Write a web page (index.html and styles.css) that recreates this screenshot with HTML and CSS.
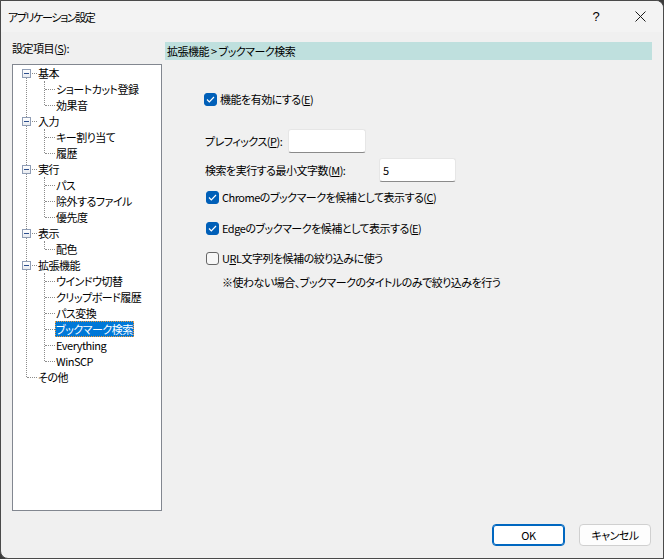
FILE: index.html
```html
<!DOCTYPE html>
<html lang="ja">

<head>
    <meta charset="UTF-8">
    <title>アプリケーション設定</title>
    <link rel="stylesheet" href="styles.css">
</head>

<body>
    <div class="window">
        <div class="titlebar">
            <span class="title">アプリケーション設定</span>
            <div class="caption">
                <span class="cap-btn help">?</span>
                <span class="cap-btn close">
                    <svg width="11" height="11" viewBox="0 0 11 11"><path d="M0.5 0.5 L10.5 10.5 M10.5 0.5 L0.5 10.5" stroke="#1a1a1a" stroke-width="1" fill="none"/></svg>
                </span>
            </div>
        </div>

        <div class="main">
            <div class="side">
                <div class="side-label">設定項目(<u>S</u>):</div>
                <div class="tree">
                    <ul class="tree-root">
                        <li class="group">
                            <div class="row"><span class="toggle"></span><span class="label">基本</span></div>
                            <ul class="children">
                                <li class="row"><span class="label">ショートカット登録</span></li>
                                <li class="row"><span class="label">効果音</span></li>
                            </ul>
                        </li>
                        <li class="group">
                            <div class="row"><span class="toggle"></span><span class="label">入力</span></div>
                            <ul class="children">
                                <li class="row"><span class="label">キー割り当て</span></li>
                                <li class="row"><span class="label">履歴</span></li>
                            </ul>
                        </li>
                        <li class="group">
                            <div class="row"><span class="toggle"></span><span class="label">実行</span></div>
                            <ul class="children">
                                <li class="row"><span class="label">パス</span></li>
                                <li class="row"><span class="label">除外するファイル</span></li>
                                <li class="row"><span class="label">優先度</span></li>
                            </ul>
                        </li>
                        <li class="group">
                            <div class="row"><span class="toggle"></span><span class="label">表示</span></div>
                            <ul class="children">
                                <li class="row"><span class="label">配色</span></li>
                            </ul>
                        </li>
                        <li class="group">
                            <div class="row"><span class="toggle"></span><span class="label">拡張機能</span></div>
                            <ul class="children">
                                <li class="row"><span class="label">ウインドウ切替</span></li>
                                <li class="row"><span class="label">クリップボード履歴</span></li>
                                <li class="row"><span class="label">パス変換</span></li>
                                <li class="row"><span class="label selected">ブックマーク検索</span></li>
                                <li class="row"><span class="label">Everything</span></li>
                                <li class="row"><span class="label">WinSCP</span></li>
                            </ul>
                        </li>
                        <li class="group">
                            <div class="row plain"><span class="label">その他</span></div>
                        </li>
                    </ul>
                </div>
            </div>

            <div class="panel">
                <div class="crumb">拡張機能 &gt; ブックマーク検索</div>
                <div class="options">
                    <label class="check-row opt-enable">
                        <span class="box checked"><svg width="9" height="7" viewBox="0 0 9 7"><path d="M1 3.5 L3.3 5.8 L8 1" stroke="#fff" stroke-width="1.2" fill="none"/></svg></span>
                        <span>機能を有効にする(<u>E</u>)</span>
                    </label>

                    <div class="field field-prefix">
                        <span class="field-label">プレフィックス(<u>P</u>):</span>
                        <span class="input"></span>
                    </div>

                    <div class="field field-min">
                        <span class="field-label">検索を実行する最小文字数(<u>M</u>):</span>
                        <span class="input">5</span>
                    </div>

                    <label class="check-row opt-chrome">
                        <span class="box checked"><svg width="9" height="7" viewBox="0 0 9 7"><path d="M1 3.5 L3.3 5.8 L8 1" stroke="#fff" stroke-width="1.2" fill="none"/></svg></span>
                        <span>Chromeのブックマークを候補として表示する(<u>C</u>)</span>
                    </label>

                    <label class="check-row opt-edge">
                        <span class="box checked"><svg width="9" height="7" viewBox="0 0 9 7"><path d="M1 3.5 L3.3 5.8 L8 1" stroke="#fff" stroke-width="1.2" fill="none"/></svg></span>
                        <span>Edgeのブックマークを候補として表示する(<u>E</u>)</span>
                    </label>

                    <label class="check-row opt-url">
                        <span class="box"></span>
                        <span>U<u>R</u>L文字列を候補の絞り込みに使う</span>
                    </label>

                    <div class="note">※使わない場合、ブックマークのタイトルのみで絞り込みを行う</div>
                </div>
            </div>
        </div>

        <div class="footer">
            <button class="btn primary">OK</button>
            <button class="btn">キャンセル</button>
        </div>
    </div>
</body>

</html>
```

FILE: styles.css
```css
body {
    margin: 0;
    background-color: #3c3c3c;
    font-family: "Noto Sans CJK JP", "Noto Sans", sans-serif;
    font-size: 11px;
    letter-spacing: -0.5px;
    font-feature-settings: "palt";
    color: #000;
    overflow: hidden;
}

.window {
    width: 664px;
    height: 559px;
    box-sizing: border-box;
    border: 1px solid #4a4a4a;
    border-radius: 0 8px 0 8px;
    background-color: #f0f0f0;
    display: flex;
    flex-direction: column;
    overflow: hidden;
}

/* title bar */
.titlebar {
    height: 31px;
    display: flex;
    align-items: center;
    justify-content: space-between;
    background-color: #f3f3f3;
    padding-left: 7px;
}

.title {
    line-height: 16px;
    letter-spacing: -1.4px;
}

.caption {
    display: flex;
    height: 100%;
}

.cap-btn {
    display: flex;
    align-items: center;
    justify-content: center;
    height: 100%;
}

.help {
    width: 42px;
    font-size: 13px;
    letter-spacing: 0;
    font-family: "Liberation Sans", sans-serif;
}

.close {
    width: 46px;
}

/* main area */
.main {
    flex: 1;
    display: flex;
    padding: 0 11px 0 11px;
    gap: 3px;
}

.side {
    width: 150px;
    padding-top: 8px;
}

.side-label {
    height: 16px;
    line-height: 16px;
    margin-bottom: 8px;
}

.tree {
    height: 447px;
    box-sizing: border-box;
    border: 1px solid #828790;
    background-color: #fff;
}

.tree ul {
    list-style: none;
    margin: 0;
    padding: 0;
    position: relative;
}

.tree-root::before {
    content: '';
    position: absolute;
    left: 13px;
    top: 8px;
    bottom: 8px;
    border-left: 1px dotted #8c8c8c;
}

.row {
    height: 16px;
    line-height: 16px;
    display: flex;
    align-items: center;
    white-space: nowrap;
    position: relative;
}

.group > .row {
    padding-left: 9px;
}

.group > .row.plain {
    padding-left: 25px;
}

.group > .row::before {
    content: '';
    position: absolute;
    left: 14px;
    top: 8px;
    width: 10px;
    border-top: 1px dotted #8c8c8c;
}

.toggle {
    width: 9px;
    height: 9px;
    box-sizing: border-box;
    border: 1px solid #8f9db5;
    background: linear-gradient(#fff, #e8ebf0);
    margin-right: 7px;
    position: relative;
    z-index: 1;
}

.toggle::after {
    content: '';
    position: absolute;
    left: 1px;
    top: 3px;
    width: 5px;
    height: 1px;
    background-color: #2d4f8e;
}

.children::before {
    content: '';
    position: absolute;
    left: 31px;
    top: 0;
    bottom: 8px;
    border-left: 1px dotted #8c8c8c;
}

.children .row {
    padding-left: 43px;
}

.children .row::before {
    content: '';
    position: absolute;
    left: 32px;
    top: 8px;
    width: 10px;
    border-top: 1px dotted #8c8c8c;
}

.label.selected {
    background-color: #0078d7;
    color: #fff;
    margin-left: -1px;
    padding: 0 1px;
    outline: 1px dotted #f09a3a;
    outline-offset: -1px;
}

/* right panel */
.panel {
    flex: 1;
    padding-top: 10px;
}

.crumb {
    height: 18px;
    line-height: 18px;
    background-color: #bfe0de;
    padding-left: 2px;
}

.options {
    display: flex;
    flex-direction: column;
    align-items: flex-start;
    padding-left: 39px;
}

.check-row {
    height: 16px;
    display: flex;
    align-items: center;
    gap: 3px;
    white-space: nowrap;
}

.box {
    width: 13px;
    height: 13px;
    box-sizing: border-box;
    border-radius: 3px;
    border: 1px solid #666;
    background-color: #f7f7f7;
    display: flex;
    align-items: center;
    justify-content: center;
}

.box.checked {
    border-color: #005fb8;
    background-color: #005fb8;
}

.opt-enable {
    margin-top: 31px;
}

.field {
    height: 24px;
    display: flex;
    align-items: center;
    margin-left: 1px;
    white-space: nowrap;
}

.field-prefix {
    margin-top: 22px;
}

.field-prefix .field-label {
    width: 83px;
}

.field-min {
    margin-top: 5px;
}

.field-min .field-label {
    width: 174px;
}

.input {
    width: 78px;
    height: 24px;
    box-sizing: border-box;
    background-color: #fff;
    border: 1px solid #e6e6e6;
    border-bottom-color: #8a8a8a;
    border-radius: 3px;
    padding-left: 3px;
    line-height: 22px;
}

.field-min .input {
    width: 77px;
}

.opt-chrome {
    margin-top: 7px;
    margin-left: 2px;
}

.opt-edge {
    margin-top: 15px;
    margin-left: 2px;
}

.opt-url {
    margin-top: 14px;
    margin-left: 2px;
}

.note {
    margin-top: 8px;
    padding-left: 18px;
    line-height: 16px;
    white-space: nowrap;
}

/* bottom buttons */
.footer {
    display: flex;
    justify-content: flex-end;
    gap: 14px;
    padding: 0 12px 12px 0;
}

.btn {
    height: 22px;
    width: 72px;
    font-family: inherit;
    font-size: 11px;
    letter-spacing: -0.5px;
    font-feature-settings: "palt";
    background-color: #fdfdfd;
    border: 1px solid #d0d0d0;
    border-radius: 4px;
    padding: 0;
    color: #000;
}

.btn.primary {
    width: 73px;
    background-color: #fff;
    border-color: #0067c0;
    box-shadow: inset 0 0 0 1px #0067c0;
}
```
